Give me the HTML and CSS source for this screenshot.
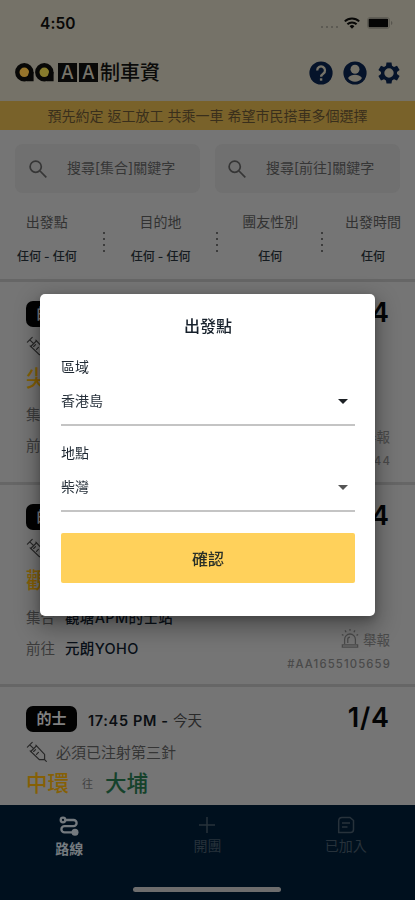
FILE: index.html
```
<!DOCTYPE html>
<html lang="zh-Hant">
<head>
<meta charset="utf-8">
<title>AA制車資</title>
<link rel="stylesheet" href="styles.css">
</head>
<body>
<svg width="0" height="0" class="defs">
  <symbol id="syringe" viewBox="0 0 22 22"><g fill="none" stroke="currentColor" stroke-width="1.2" stroke-linecap="round"><path d="M1.500 6.500 6.500 1.500M4 4l4 4M5 11l6-6 8.500 9v5.500h-5.500zM4.300 10.300l1 1M10.300 4.300l1 1M19 19l2.300 2.300M8 11l2-2M11 14l2-2"/></g></symbol>
  <symbol id="siren" viewBox="0 0 20 22"><g fill="none" stroke="currentColor" stroke-width="1.4"><path d="M4 17v-5a6 6 0 0 1 12 0v5M7.500 16v-4a2.500 2.500 0 0 1 2.500-2.500M1.500 18h17v2.500h-17zM10 .5v2M4.500 2l1.200 2M15.500 2l-1.200 2M1 6.500l1.700 1M19 6.500l-1.700 1"/></g></symbol>
  <symbol id="search" viewBox="0 0 18 18"><g fill="none" stroke="currentColor" stroke-width="1.7"><circle cx="6.7" cy="6.7" r="5.6"/><path d="m11 11 6.3 6.3"/></g></symbol>
</svg>
<div class="app">
  <header class="header">
    <div class="status">
      <span class="clock">4:50</span>
      <span class="signal"><i></i><i></i><i></i><i></i></span>
      <svg class="wifi" viewBox="0 0 16 12"><g fill="none" stroke="#080807" stroke-width="2"><path d="M.8 4.400a10.300 10.300 0 0 1 14.400 0M3.400 7.300a6.500 6.500 0 0 1 9.200 0"/></g><path d="M5.600 9.200a3.500 3.500 0 0 1 4.800 0L8 11.700z" fill="#080807"/></svg>
      <svg class="battery" viewBox="0 0 26 12"><rect x=".5" y=".5" width="22" height="11" rx="2.5" fill="none" stroke="#605e56"/><rect x="1.600" y="1.800" width="19.500" height="8.400" rx="1" fill="#050505"/><path d="M24 4v4q1.400-.6 1.400-2T24 4" fill="#57554e"/></svg>
    </div>
    <div class="brand">
      <svg class="logo" viewBox="0 0 39 19"><g fill="#96742b" stroke="#080807" stroke-width="4.400"><circle cx="9.300" cy="9.300" r="7"/><circle cx="29.300" cy="9.300" r="7" fill="#877b2c"/></g><path d="M14 9h4.600v9.300H12zM34 9h4.600v9.300H32z" fill="#080807"/></svg>
      <span class="box">A</span><span class="box">A</span><span class="name">制車資</span>
      <div class="actions">
        <svg viewBox="0 0 24 24"><circle cx="12" cy="12" r="11.600" fill="#05132a"/><path d="M8.200 9.400a3.900 3.900 0 1 1 6.200 3.100c-1.500 1.100-2.300 1.700-2.300 3.300" fill="none" stroke="#757268" stroke-width="2.300"/><rect x="10.900" y="17.300" width="2.400" height="2.400" fill="#757268"/></svg>
        <svg viewBox="0 0 24 24"><circle cx="12" cy="12" r="11.600" fill="#05132a"/><circle cx="12" cy="8.300" r="4.500" fill="#757268"/><path d="M5 17c1.600-2.300 4.400-3.300 7-3.300s5.400 1 7 3.300c-1.700 2.500-4.100 3.700-7 3.700S6.700 19.500 5 17" fill="#757268"/></svg>
        <svg viewBox="0 0 24 24"><path fill="#05132a" fill-rule="evenodd" d="m9.500 1.500-.5 3.200-2 1.200-3-1.200-2.600 4.400L4 11v2l-2.600 2 2.600 4.400 3-1.200 2 1.200.5 3.100h5l.5-3.100 2-1.200 3 1.200 2.600-4.400-2.600-2v-2l2.600-1.900L20 4.700l-3 1.200-2-1.200-.5-3.200zM12 7.300a4.700 4.700 0 1 1 0 9.400 4.700 4.700 0 0 1 0-9.400"/></svg>
      </div>
    </div>
  </header>
  <div class="banner">預先約定 返工放工 共乘一車 希望市民搭車多個選擇</div>
  <div class="searches">
    <div class="search"><svg><use href="#search"/></svg><span>搜尋[集合]關鍵字</span></div>
    <div class="search"><svg><use href="#search"/></svg><span>搜尋[前往]關鍵字</span></div>
  </div>
  <div class="filters">
    <div class="filter"><span>出發點</span><b>任何 - 任何</b></div>
    <div class="dots"><i></i><i></i><i></i><i></i></div>
    <div class="filter"><span>目的地</span><b>任何 - 任何</b></div>
    <div class="dots"><i></i><i></i><i></i><i></i></div>
    <div class="filter narrow"><span>團友性別</span><b>任何</b></div>
    <div class="dots"><i></i><i></i><i></i><i></i></div>
    <div class="filter narrow"><span>出發時間</span><b>任何</b></div>
  </div>
  <main class="list">
    <article class="card">
      <div class="top"><span class="pill">的士</span><span class="count">1/4</span></div>
      <div class="need"><svg><use href="#syringe"/></svg></div>
      <div class="route"><span class="from">尖</span></div>
      <div class="place"><span>集合</span></div>
      <div class="place"><span>前往</span></div>
      <div class="report"><div><span>舉報</span></div><small>44</small></div>
    </article>
    <article class="card">
      <div class="top"><span class="pill">的士</span><span class="count">1/4</span></div>
      <div class="need"><svg><use href="#syringe"/></svg></div>
      <div class="route"><span class="from">觀</span></div>
      <div class="place"><span>集合</span><b>觀塘APM的士站</b></div>
      <div class="place"><span>前往</span><b>元朗YOHO</b></div>
      <div class="report"><div><svg><use href="#siren"/></svg><span>舉報</span></div><small>#AA1655105659</small></div>
    </article>
    <article class="card">
      <div class="top"><span class="pill">的士</span><span class="time">17:45 PM - <em>今天</em></span><span class="count">1/4</span></div>
      <div class="need"><svg><use href="#syringe"/></svg><span>必須已注射第三針</span></div>
      <div class="route"><span class="from">中環</span><span class="to">往</span><span class="dest">大埔</span></div>
    </article>
  </main>
  <nav class="nav">
    <div class="tab active"><svg viewBox="0 0 20 20"><g fill="none" stroke="currentColor" stroke-width="2.300"><circle cx="4" cy="4" r="2.300"/><path d="M6.500 4h8a3 3 0 0 1 0 6.200h-9a3 3 0 0 0 0 6.200h8"/></g><circle cx="16" cy="16.300" r="3.500" fill="currentColor"/></svg><span>路線</span></div>
    <div class="tab"><svg viewBox="0 0 20 20"><path d="M10 2v16M2 10h16" stroke="currentColor" stroke-width="1.500"/></svg><span>開團</span></div>
    <div class="tab"><svg viewBox="0 0 20 20"><path d="M6 2.500h8l3.500 3v9q0 3-3 3H2.700V6q0-3.500 3.300-3.500M6 8h8M6 12h5.500" fill="none" stroke="currentColor" stroke-width="1.500"/></svg><span>已加入</span></div>
    <div class="home"></div>
  </nav>
</div>
<div class="overlay">
  <section class="dialog">
    <h1>出發點</h1>
    <label>區域</label>
    <div class="select"><span>香港島</span><i></i></div>
    <label>地點</label>
    <div class="select second"><span>柴灣</span><i></i></div>
    <button>確認</button>
  </section>
</div>
</body>
</html>
```
FILE: styles.css
```
* { box-sizing: border-box; }
body { margin: 0; font-family: Inter, "Noto Sans CJK TC", sans-serif; background: #757575; color: #10161c; }
i, em { font-style: normal; }
svg { display: block; flex: none; }
.defs { position: absolute; }
.app { width: 415px; height: 900px; overflow: hidden; display: flex; flex-direction: column; }

.header { height: 101px; flex: none; background: #757268; }
.status { height: 46px; display: flex; align-items: center; padding: 0 21px 0 40px; }
.clock { font-size: 15.500px; font-weight: 600; color: #080807; flex: 1; letter-spacing: .1px; }
.signal { display: flex; gap: 3px; margin: 8px 6px 0 0; }
.signal i { width: 2px; height: 2px; border-radius: 1px; background: #55534c; }
.wifi { width: 16px; height: 12px; margin-right: 7px; }
.battery { width: 26px; height: 12px; margin-right: 1px; }
.brand { display: flex; align-items: center; height: 53px; padding: 0 14px 0 15px; }
.logo { width: 39px; height: 19px; margin-right: 4px; }
.box { width: 19px; height: 19px; margin-right: 2px; background: #090908; color: #77746a; font-size: 18px; line-height: 19px; text-align: center; font-weight: 500; }
.name { font-size: 20px; line-height: 26px; font-weight: 500; color: #0b0b0a; }
.actions { display: flex; gap: 10px; margin-left: auto; }
.actions svg { width: 24px; height: 24px; }

.banner { height: 29px; flex: none; background: #79622a; color: #392f1c; font-size: 14px; line-height: 30px; text-align: center; white-space: nowrap; }
.searches { display: flex; gap: 15px; padding: 14px 15px 0; flex: none; }
.search { flex: 1; height: 49px; border-radius: 8px; background: #707070; display: flex; align-items: center; padding-left: 14px; color: #363636; font-size: 14px; white-space: nowrap; }
.search svg { width: 18px; height: 18px; margin-right: 20px; }
.search span { margin-top: -3px; }
.search:last-child svg { margin-left: -1px; }
.filters { display: flex; height: 86px; flex: none; padding: 17px 8px 0 9px; }
.filter { width: 76px; display: flex; flex-direction: column; align-items: center; white-space: nowrap; font-size: 14px; line-height: 24px; color: #323232; }
.filter b { font-size: 12px; font-weight: 500; margin-top: 11px; color: #151b20; }
.filter.narrow { width: 68px; }
.dots { flex: 0 0 38px; display: flex; flex-direction: column; align-items: center; gap: 4px; padding-top: 22px; }
.dots i { width: 2px; height: 2px; background: #3c3c3c; }
.narrow + .dots { flex-basis: 35px; }

.list { flex: 1; min-height: 0; overflow: hidden; }
.card { position: relative; height: 202.500px; padding: 19px 26px 0; border-top: 3px solid #666; }
.top { display: flex; align-items: center; height: 26px; }
.pill { width: 51px; height: 26px; border-radius: 7px; background: #020202; color: #808080; font-size: 15px; line-height: 26px; text-align: center; font-weight: 600; }
.time { margin-left: 11px; font-size: 14.500px; letter-spacing: .65px; font-weight: 600; color: #0a0e12; white-space: nowrap; }
.time em { color: #292929; font-weight: 400; letter-spacing: 0; }
.count { margin-left: auto; font-size: 27px; line-height: 26px; font-weight: 600; letter-spacing: .9px; margin-right: -1px; color: #030405; position: relative; top: -1px; }
.need { display: flex; align-items: center; height: 26px; margin-top: 6px; font-size: 15px; color: #353535; }
.need svg { width: 21px; height: 21px; color: #262626; }
.need span { margin-left: 9px; }
.route { display: flex; align-items: center; height: 34px; font-size: 21.500px; font-weight: 500; }
.from { color: #866005; }
.to { font-size: 11px; font-weight: 400; color: #424242; margin: 4px 12px 0 13px; }
.dest { color: #15422b; }
.place { display: flex; height: 31px; align-items: center; font-size: 14.500px; color: #3b3b3b; }
.route + .place { margin-top: 5px; }
.place b { margin-left: 10px; color: #091018; font-weight: 500; letter-spacing: .35px; }
.report { position: absolute; right: 25px; top: 142px; text-align: right; color: #4a4a4a; font-size: 13.500px; }
.report div { display: flex; justify-content: flex-end; align-items: center; gap: 4px; height: 24px; }
.report svg { width: 18px; height: 21px; }
.report small { display: block; font-size: 11.300px; line-height: 27px; letter-spacing: 1.150px; margin-right: -1px; font-weight: 500; }

.nav { height: 95px; flex: none; background: #00101e; display: grid; grid-template-columns: repeat(3, 1fr); grid-template-rows: 79px 16px; }
.tab { display: flex; flex-direction: column; align-items: center; padding-top: 10px; color: #27323b; font-size: 14px; line-height: 22px; }
.tab svg { width: 20px; height: 20px; }
.active { padding-top: 11px; font-weight: 600; color: #747a7f; }
.active span { margin-top: 2px; }
.home { grid-column: 1 / 4; width: 148px; height: 5px; margin: 3px auto 0; border-radius: 3px; background: #6d6d6d; }

.overlay { position: fixed; inset: 0; display: flex; justify-content: center; align-items: flex-start; padding-top: 294px; }
.dialog { width: 335px; height: 322px; background: #fff; border-radius: 5px; padding: 20px 20px 0 21px; box-shadow: 0 9px 22px 4px rgba(0,0,0,.3), 0 3px 8px rgba(0,0,0,.22); }
.dialog h1 { margin: 0 0 18px; font-size: 16px; line-height: 24px; font-weight: 500; text-align: center; color: #16202b; }
.dialog label { display: block; font-size: 14px; line-height: 22px; color: #1d2731; }
.select { height: 48px; margin-bottom: 16px; border-bottom: 2px solid #c4c4c4; display: flex; justify-content: space-between; align-items: center; padding: 0 7px 0 0; font-size: 14px; color: #27313b; }
.select span { margin-top: -2px; }
.select i { border: 5px solid transparent; border-top-color: #1c2024; border-bottom: 0; }
.second { margin-bottom: 21px; }
.second i { border-top-color: #555; }
.dialog button { width: 100%; height: 50px; padding: 0; border: 0; border-radius: 2px; background: #ffd15b; font: 500 16px Inter, "Noto Sans CJK TC", sans-serif; color: #2a3028; }
```
